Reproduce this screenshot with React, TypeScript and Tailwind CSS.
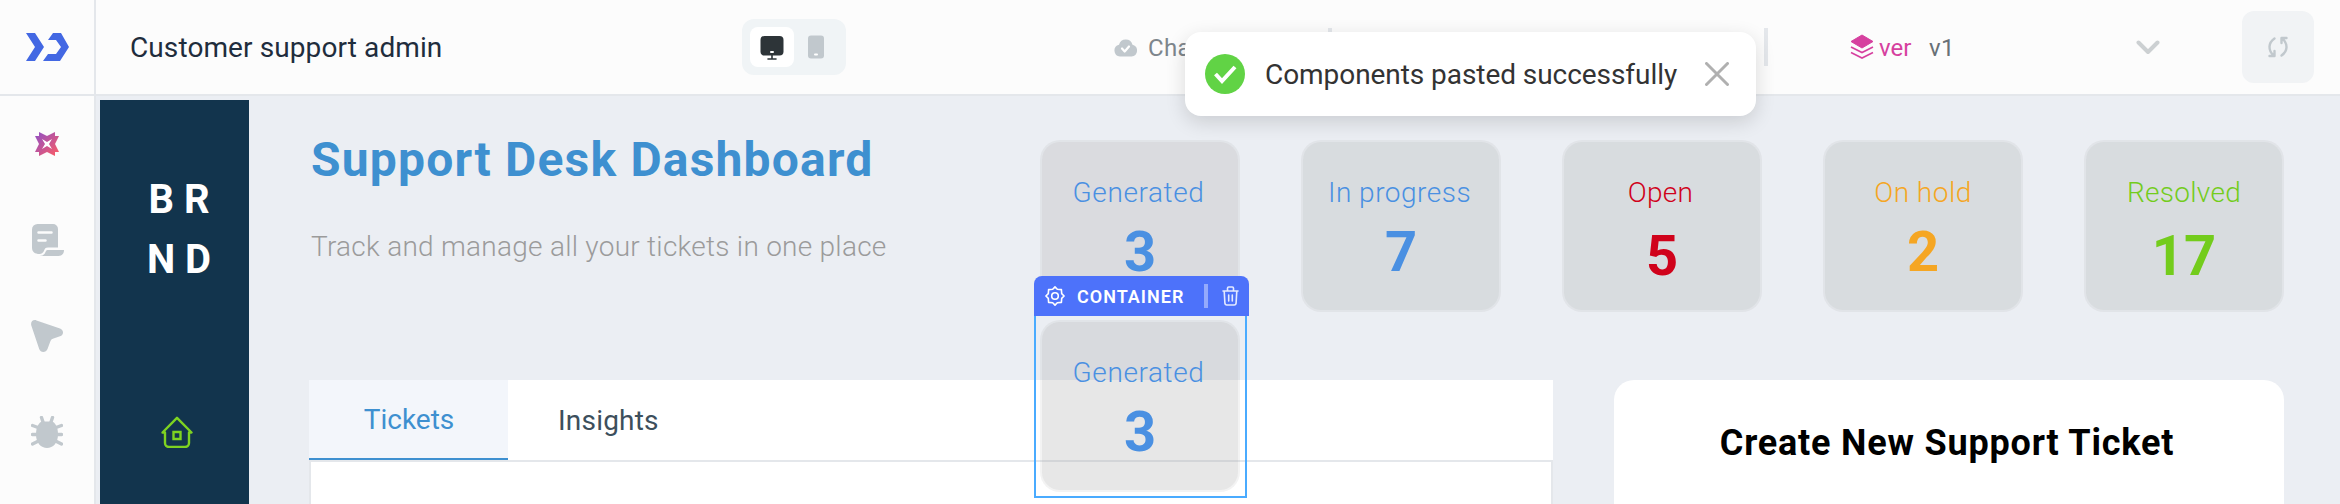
import React from "react";

type CardData = { label: string; value: string; box: string; color: string; gap: string; track: string };

const cards: CardData[] = [
  { label: "Generated", value: "3", box: "bg-[#dadbdf]", color: "text-[#4a90e2]", gap: "mt-[14px]", track: "tracking-[0.6px] pr-[3px]" },
  { label: "In progress", value: "7", box: "bg-[#d8dcdf]", color: "text-[#4a90e2]", gap: "mt-[14px]", track: "tracking-[0.5px] pr-[3px]" },
  { label: "Open", value: "5", box: "bg-[#d8dcdf]", color: "text-[#d0021b]", gap: "mt-[18px]", track: "tracking-[0.3px] pr-[3px]" },
  { label: "On hold", value: "2", box: "bg-[#d8dcdf]", color: "text-[#f5a623]", gap: "mt-[14px]", track: "tracking-[0.5px]" },
  { label: "Resolved", value: "17", box: "bg-[#d8dcdf]", color: "text-[#73cc1c]", gap: "mt-[18px]", track: "tracking-[0.3px]" },
];

function Card({ c, box }: { c: CardData; box?: string }) {
  return (
    <div className={`flex h-[172px] w-[200px] shrink-0 flex-col items-center rounded-[20px] border-2 border-[#9f9f9f]/12 bg-clip-padding pt-[34px] ${box ?? c.box} ${c.color}`}>
      <span className={`text-[28px] leading-[34px] font-[350] whitespace-nowrap ${c.track}`}>{c.label}</span>
      <span className={`text-[56px] leading-[56px] font-bold ${c.gap}`}>{c.value}</span>
    </div>
  );
}

function ScrollIcon() {
  return (
    <svg className="relative left-px" width="32" height="32" viewBox="0 0 32 32">
      <path fill="#c1c8cd" d="M5.500 0h15.500a5 5 0 0 1 5 5v18.500H16c-2.500 0-3.300 1.200-4 3.300-.6 2-2.300 3.200-4.500 3.200C3 30 0 28 0 23.500V5.500A5.500 5.500 0 0 1 5.500 0z" />
      <path fill="#c1c8cd" d="M15.500 26H32c0 3.500-2 6-5.500 6H7.500c3.500-.2 5-1.500 6-4 .5-1.300 1-2 2-2z" />
      <path d="M6.500 8.500h13M6.500 16.500h7" stroke="#fcfcfc" strokeWidth="2.500" strokeLinecap="round" />
    </svg>
  );
}

function CursorIcon() {
  return (
    <svg width="32" height="32" viewBox="0 0 32 32">
      <path fill="#c1c8cd" d="M5.500.4 29 8.500c4 1.500 4 6.500 0 7.800l-6.500 2.200c-1.800.7-2.600 1.300-3.200 3L16.500 29c-1.500 4-7 4-8.300 0L.3 5.500C-.7 2 2 -.8 5.500.4z" />
    </svg>
  );
}

function BugIcon() {
  return (
    <svg width="32" height="32" viewBox="0 0 32 32">
      <path d="M10.500 1.500 12 6M21.500 1.500 20 6M1.500 9.500 7 11.500M30.500 9.500 25 11.500M1.500 18.500H7M30.500 18.500H25M1.500 28 7.500 25M30.500 28l-6-3" stroke="#c1c8cd" strokeWidth="3.400" strokeLinecap="round" fill="none" />
      <path fill="#c1c8cd" d="M11 5.500h10c3 1 6 5 6 13C27 27 22 32 16 32S5 27 5 18.500c0-8 3-12 6-13z" />
    </svg>
  );
}

function HouseIcon() {
  return (
    <svg width="32" height="32" viewBox="0 0 32 32" fill="none" stroke="#7ed321" strokeWidth="2.400" strokeLinejoin="round" strokeLinecap="round">
      <path d="M4 16.500H1.500L16 1.800l14.500 14.700H28V27a4 4 0 0 1-4 4H8a4 4 0 0 1-4-4z" />
      <path d="M12.500 16h7v7h-7z" strokeLinejoin="miter" />
    </svg>
  );
}

export default function App() {
  return (
    <div className="relative flex h-[504px] w-[2340px] flex-col overflow-hidden bg-[#ebeef3] font-['Roboto',sans-serif]">
      <header className="flex h-24 shrink-0 items-center border-b-2 border-[#e4e7eb] bg-[#fcfcfc]">
        <div className="flex h-full w-24 items-center border-r-2 border-[#e4e7eb] pl-[26px]">
          <svg width="43" height="28" viewBox="0 0 43 28" fill="#4368e3">
            <path d="M0 0h9l9 14-9 14H0l9-14zM27 0h8l8 14-9 14H17l5-7h8l5-7-5-7h-8z" />
          </svg>
        </div>
        <div className="w-[646px] pt-px pl-[34px] text-[28px] tracking-[0.1px] text-[#1f2d3d]">Customer support admin</div>
        <div className="flex h-14 w-[104px] items-center rounded-xl bg-[#f0f4f6] pl-2">
          <div className="flex h-10 w-11 items-center justify-center rounded-lg bg-white">
            <svg className="mt-0.5" width="24" height="24" viewBox="0 0 24 24">
              <rect x=".5" width="23" height="19.500" rx="4" fill="#2d3438" />
              <path d="M12 19v4M8 23h8" stroke="#2d3438" strokeWidth="1.600" strokeLinecap="round" />
              <rect x="10" y="15" width="4" height="2" rx="1" fill="#fff" />
            </svg>
          </div>
          <svg className="ml-[14px]" width="16" height="24" viewBox="0 0 16 24">
            <rect width="16" height="23" y=".5" rx="3" fill="#c1c8cd" />
            <rect x="6" y="18.500" width="4" height="2" rx="1" fill="#fff" />
          </svg>
        </div>
        <svg className="ml-[268px] shrink-0" width="23" height="20" viewBox="0 0 23 20">
          <path d="M6 19.500A6 6 0 0 1 5 7.700a7 7 0 0 1 13.500 0A6 6 0 0 1 17.500 19.500z" fill="#c1c8cd" />
          <path d="m8 11.500 2.700 3L15 9.500" fill="none" stroke="#fff" strokeWidth="2.200" strokeLinecap="round" strokeLinejoin="round" />
        </svg>
        <span className="ml-[11px] w-[180px] pt-px text-2xl tracking-[0.3px] text-[#7e868c]">Cha</span>
        <div className="h-[38px] w-1 bg-[#e4e7eb]" />
        <div className="ml-[432px] h-[38px] w-1 bg-[#e4e7eb]" />
        <svg className="ml-[82px] shrink-0" width="24" height="26" viewBox="0 0 24 26">
          <path d="M12 1 23 7.500 12 14 1 7.500z" fill="#d6409f" stroke="#d6409f" strokeLinejoin="round" />
          <path d="m1 13 11 5.500L23 13M1 18.500 12 24l11-5.500" fill="none" stroke="#d6409f" strokeWidth="1.600" />
        </svg>
        <span className="ml-[5px] w-[50px] pt-px text-2xl text-[#d6409f]">ver</span>
        <span className="w-[207px] pt-px text-2xl tracking-[0.4px] text-[#687076]">v1</span>
        <svg width="24" height="15" viewBox="0 0 24 15">
          <path d="m2.500 2.500 9.500 9.500 9.500-9.500" fill="none" stroke="#ccd0d2" strokeWidth="4" strokeLinecap="round" strokeLinejoin="round" />
        </svg>
        <div className="ml-[82px] flex size-[72px] items-center justify-center rounded-xl bg-[#f1f3f5]">
          <svg width="22" height="22" viewBox="0 0 22 22" fill="none" stroke="#c1c8cd" strokeWidth="2.400" strokeLinecap="round" strokeLinejoin="round">
            <path d="M7.500 2.500C1 7 1 14 6.500 19.500M2.500 20h5v-5M14.500 19.500C21 15 21 8 15.500 2.500M19.500 2h-5v5" />
          </svg>
        </div>
      </header>

      <div className="flex min-h-0 flex-1">
        <aside className="flex w-24 shrink-0 flex-col items-center border-r-2 border-[#e4e7eb] bg-[#fcfcfc] pt-9">
          <svg width="24" height="24" viewBox="0 0 24 24">
            <defs>
              <linearGradient id="spark" x1="0" y1="0" x2="1" y2="1">
                <stop stopColor="#8d50c8" />
                <stop offset="1" stopColor="#ff5c62" />
              </linearGradient>
            </defs>
            <path fill="url(#spark)" d="M4 0l8 4 8-4v4h4l-4 8 4 8h-4v4l-8-4-8 4v-4H0l4-8-4-8h4z" />
            <path fill="#fff" d="m7 7 5 3 5-3-3 5 3 5-5-3-5 3 3-5z" />
          </svg>
          <div className="mt-[68px] flex flex-col gap-16">
            <ScrollIcon />
            <CursorIcon />
            <BugIcon />
          </div>
        </aside>

        <nav className="mt-1 ml-1 flex w-[149px] shrink-0 flex-col items-center bg-[#12344d] pt-[70px]">
          <div className="pl-[9px] text-center text-[40px] leading-[60px] font-bold text-white">
            B R<br />N D
          </div>
          <div className="mt-[126px] pl-[5px]"><HouseIcon /></div>
        </nav>

        <main className="flex flex-1 flex-col pl-[60px]">
          <div className="flex h-[284px]">
            <div className="w-[731px] pt-[36px] pl-[2px]">
              <h1 className="text-[48px] leading-[56px] font-bold tracking-[1.2px] whitespace-nowrap text-[#3e90d0]">Support Desk Dashboard</h1>
              <p className="mt-[42px] text-[28px] leading-[34px] font-[350] tracking-[0.26px] whitespace-nowrap text-[#9b9b9b]">Track and manage all your tickets in one place</p>
            </div>
            <div className="flex gap-[61px] pt-11">
              {cards.map((c) => <Card key={c.label} c={c} />)}
            </div>
          </div>
          <div className="flex flex-1">
            <section className="flex w-[1244px] flex-col bg-white">
              <div className="flex h-[82px] border-b-2 border-[#e4e7eb] text-[28px]">
                <div className="flex w-[199px] items-center justify-center border-b-2 border-[#3e90d0] bg-[#f3f6fb] pt-px pl-px text-[#3e90d0]">Tickets</div>
                <div className="flex items-center pt-px pl-[50px] tracking-[0.2px] text-[#3d4f5c]">Insights</div>
              </div>
              <div className="flex-1 border-x-2 border-[#e4e7eb]" />
            </section>
            <section className="ml-[61px] w-[670px] rounded-t-[20px] bg-white pt-[41px] pr-[4px] text-center">
              <h2 className="text-[36px] leading-[44px] font-bold tracking-[0.8px] text-black">Create New Support Ticket</h2>
            </section>
          </div>
        </main>
      </div>

      <div className="absolute top-[276px] left-[1034px] w-[215px]">
        <div className="flex h-10 items-center rounded-t-lg bg-[#4d72fa] pl-[11px] text-white">
          <svg width="20" height="20" viewBox="0 0 20 20" fill="none" stroke="#fff" strokeWidth="1.600" strokeLinejoin="round">
            <path d="M10 .9 12.300 3.300 16.400 3.600 16.700 7.700 19.100 10 16.700 12.300 16.400 16.400 12.300 16.700 10 19.100 7.700 16.700 3.600 16.400 3.300 12.300.9 10 3.300 7.700 3.600 3.600 7.700 3.300z" />
            <circle cx="10" cy="10" r="3.300" />
          </svg>
          <span className="ml-[12px] w-[127px] text-[18px] font-semibold tracking-[1px]">CONTAINER</span>
          <div className="h-6 w-1 bg-white/40" />
          <svg className="ml-[14px]" width="17" height="20" viewBox="0 0 17 20" fill="none" stroke="#fff" strokeOpacity=".85" strokeWidth="1.600" strokeLinecap="round" strokeLinejoin="round">
            <path d="M1 5h15M5.500 5V2.200c0-.8.4-1.200 1.200-1.200h3.600c.8 0 1.200.4 1.200 1.200V5M2.200 5l.7 12c.1 1.400.8 2 2 2h7.200c1.200 0 1.900-.6 2-2l.7-12M6.700 9v6M10.300 9v6" />
          </svg>
        </div>
        <div className="h-[182px] w-[213px] border-2 border-t-0 border-[#4aabff] pt-1 pl-1">
          <Card c={cards[0]} box="bg-[#9f9f9f]/25" />
        </div>
      </div>

      <div className="absolute top-8 left-[1185px] flex h-[84px] w-[571px] items-center rounded-2xl bg-white pl-5 text-[28px] tracking-[-0.06px] text-[#333] shadow-[0_6px_20px_rgba(0,0,0,0.14)]">
        <svg className="mr-[20px]" width="40" height="40" viewBox="0 0 40 40">
          <circle cx="20" cy="20" r="20" fill="#61d345" />
          <path d="m10.500 20 6.500 7L30 13" fill="none" stroke="#fff" strokeWidth="4" />
        </svg>
        <span className="w-[440px] pt-px whitespace-nowrap">Components pasted successfully</span>
        <svg width="24" height="24" viewBox="0 0 24 24" stroke="#b0b0b0" strokeWidth="3" strokeLinecap="round">
          <path d="m1.500 1.500 21 21M22.500 1.500l-21 21" />
        </svg>
      </div>
    </div>
  );
}
